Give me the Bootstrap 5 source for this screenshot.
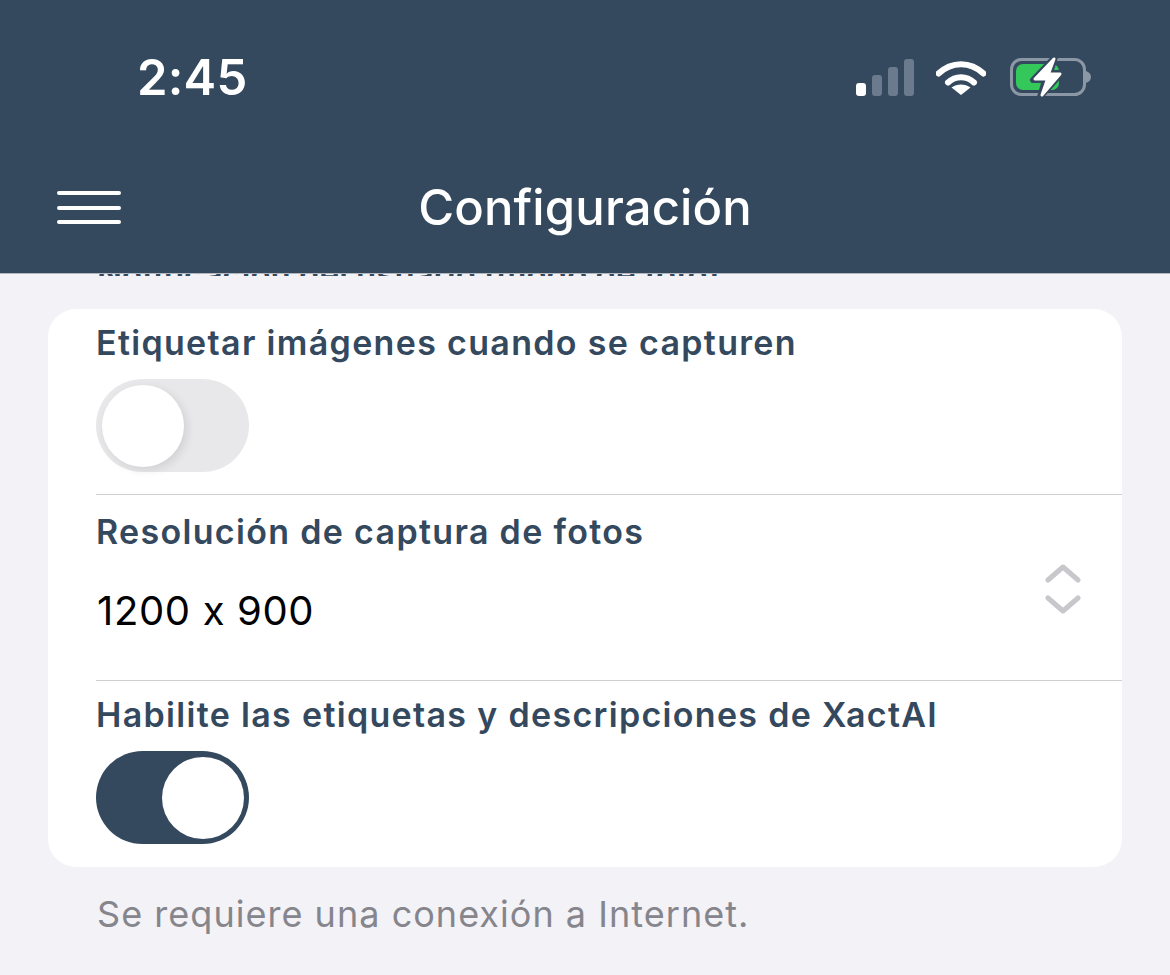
<!DOCTYPE html>
<html lang="es">
<head>
<meta charset="utf-8">
<title>Configuración</title>
<link href="https://cdn.jsdelivr.net/npm/bootstrap@5.3.0/dist/css/bootstrap.min.css" rel="stylesheet">
<style>
html,body{height:100%}
body{background:#f2f2f7;font-family:Inter,"Liberation Sans",sans-serif;overflow:hidden;width:1170px;height:975px}
.app-head{background:#34495e;height:273px;color:#fff;box-shadow:0 1px 0 #b4b6bd;position:relative;z-index:2}
.status-row{height:150px;padding:51px 78px 0 137px}
.clock{font-size:49px;font-weight:600;line-height:54px;letter-spacing:.2px}
.status-icons{gap:22px;padding-top:5px}
.batt-icon{margin-left:2px}
.nav-row{height:123px}
.burger{width:64px;height:33px;flex-direction:column;justify-content:space-between;display:flex;position:absolute;left:57px;top:191px}
.burger i{display:block;height:4px;background:#fff;border-radius:2px}
.nav-title{font-size:49px;font-weight:500;line-height:56px;letter-spacing:.12px;margin-top:-8px}
.scrolled{height:3px;overflow:hidden;padding-left:97px;font-size:33px;font-weight:600;line-height:3px;color:#34495e;white-space:nowrap}
.panel-wrap{padding:33px 48px 0}
.set-panel{background:#fff;border-radius:28px;height:558px;padding-left:48px}
.set-row{border-bottom:1px solid #cfcfd3;height:186px}
.set-row:last-child{border-bottom:0}
.set-label{font-size:34px;font-weight:600;color:#34495e;line-height:40px;letter-spacing:1.32px;display:block;white-space:nowrap}
.row-a .set-label{padding-top:14px}
.row-b .set-label{padding-top:17px}
.row-c .set-label{padding-top:14px}
.tog{width:153px;height:93px;border-radius:47px;position:relative;margin-top:16px}
.tog-off{background:#e8e8ea}
.tog-on{background:#34495e}
.tog b{position:absolute;top:6px;width:82px;height:82px;border-radius:50%;background:#fff}
.tog-off b{left:6px;box-shadow:3px 3px 10px rgba(0,0,0,.1)}
.tog-on b{right:5px}
.pick{padding-right:41px;height:100px}
.pick-val{font-size:40px;line-height:48px;color:#000;letter-spacing:.65px;margin:18px 0 0 1px}
.pick-arrows{margin-bottom:26px}
.foot-note{font-size:36px;line-height:42px;color:#85858b;padding:26px 0 0 97px;letter-spacing:1.03px}
</style>
</head>
<body>
<header class="app-head">
  <div class="status-row d-flex justify-content-between align-items-start">
    <div class="clock">2:45</div>
    <div class="status-icons d-flex align-items-center">
      <svg width="58" height="38" viewBox="0 0 58 38"><rect x="0" y="25" width="10" height="13" rx="3" fill="#fff"/><rect x="16" y="17" width="10" height="21" rx="3" fill="#6b7a8c"/><rect x="32" y="9" width="10" height="29" rx="3" fill="#6b7a8c"/><rect x="48" y="1" width="10" height="37" rx="3" fill="#6b7a8c"/></svg>
      <svg width="50" height="38" viewBox="0 0 50 38"><path d="M2.500 15.500C15.500 3 34.500 3 47.500 15.500" fill="none" stroke="#fff" stroke-width="6" stroke-linecap="round"/><path d="M12 24.500C19.500 17.500 30.500 17.500 38 24.500" fill="none" stroke="#fff" stroke-width="6" stroke-linecap="round"/><path d="M25 37L15.500 29.500C21 25.500 29 25.500 34.500 29.500Z" fill="#fff"/></svg>
      <svg class="batt-icon" width="82" height="42" viewBox="0 0 82 42"><rect x="1.500" y="3.500" width="73" height="35" rx="10" fill="none" stroke="#8b97a5" stroke-width="3"/><rect x="6" y="8" width="43" height="26" rx="7" fill="#34c759"/><path d="M76 15C79 16 81 18 81 21C81 24 79 26 76 27Z" fill="#8b97a5"/><path d="M45 1L23 24H35L30 41L52 17H40Z" fill="#34495e" stroke="#34495e" stroke-width="6" stroke-linejoin="round"/><path d="M44 3L25 23H37.500L32 39L50 18H38.500Z" fill="#fff" stroke="#fff" stroke-width="3" stroke-linejoin="round"/></svg>
    </div>
  </div>
  <div class="burger"><i></i><i></i><i></i></div>
  <div class="nav-row d-flex justify-content-center align-items-center">
    <div class="nav-title">Configuración</div>
  </div>
</header>
<div class="scrolled">Notificación del usuario (modo de foto)</div>
<div class="panel-wrap">
  <section class="set-panel">
    <div class="set-row row-a">
      <span class="set-label">Etiquetar imágenes cuando se capturen</span>
      <div class="tog tog-off"><b></b></div>
    </div>
    <div class="set-row row-b">
      <span class="set-label">Resolución de captura de fotos</span>
      <div class="pick d-flex justify-content-between align-items-center">
        <span class="pick-val">1200 x 900</span>
        <svg class="pick-arrows" width="36" height="50" viewBox="0 0 36 50"><path d="M3 16L18 3L33 16M3 34L18 47L33 34" fill="none" stroke="#c8c8cc" stroke-width="5" stroke-linecap="round" stroke-linejoin="round"/></svg>
      </div>
    </div>
    <div class="set-row row-c">
      <span class="set-label">Habilite las etiquetas y descripciones de XactAI</span>
      <div class="tog tog-on"><b></b></div>
    </div>
  </section>
</div>
<p class="foot-note m-0">Se requiere una conexión a Internet.</p>
<script src="https://cdn.jsdelivr.net/npm/bootstrap@5.3.0/dist/js/bootstrap.bundle.min.js"></script>
</body>
</html>
